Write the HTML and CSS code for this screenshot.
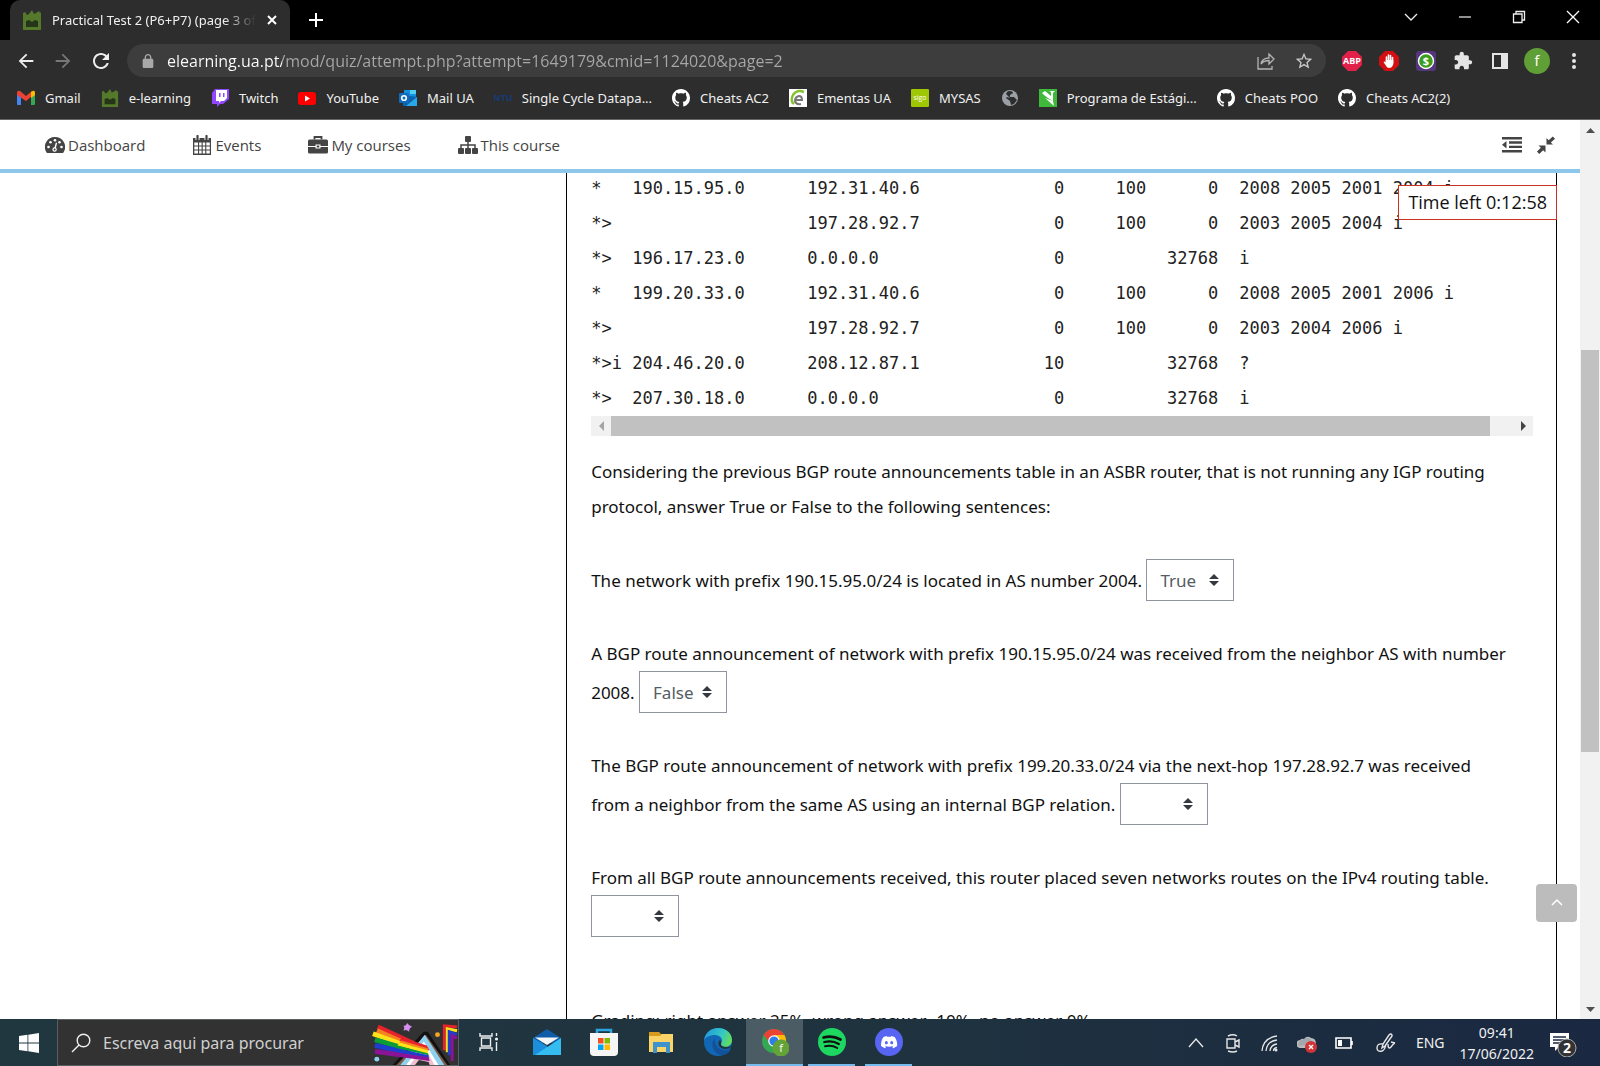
FILE: index.html
```html
<!DOCTYPE html>
<html lang="en">
<head>
<meta charset="utf-8">
<title>Practical Test 2 (P6+P7) (page 3 of 5)</title>
<link rel="stylesheet" href="styles.css">
</head>
<body>
<svg class="defs" aria-hidden="true">
  <symbol id="castle" viewBox="0 0 20 20"><path fill="#55792b" d="M1 3l2-1 2 3 2-1 3-4 2 4 2-1 3-2 1 2 1-1v18H1z"/><path fill="#26351a" d="M4 11l3-1 3 2 3-2 3 1v6H4z"/></symbol>
  <symbol id="github" viewBox="0 0 16 16"><path fill="#fff" d="M8 0C3.58 0 0 3.58 0 8c0 3.54 2.29 6.53 5.47 7.59.4.07.55-.17.55-.38 0-.19-.01-.82-.01-1.49-2.01.37-2.53-.49-2.69-.94-.09-.23-.48-.94-.82-1.13-.28-.15-.68-.52-.01-.53.63-.01 1.08.58 1.23.82.72 1.21 1.87.87 2.33.66.07-.52.28-.87.51-1.07-1.78-.2-3.64-.89-3.64-3.95 0-.87.31-1.59.82-2.15-.08-.2-.36-1.02.08-2.12 0 0 .67-.21 2.2.82.64-.18 1.32-.27 2-.27.68 0 1.36.09 2 .27 1.53-1.04 2.2-.82 2.2-.82.44 1.1.16 1.92.08 2.12.51.56.82 1.27.82 2.15 0 3.07-1.87 3.75-3.65 3.95.29.25.54.73.54 1.48 0 1.07-.01 1.93-.01 2.2 0 .21.15.46.55.38A8.013 8.013 0 0016 8c0-4.42-3.58-8-8-8z"/></symbol>
</svg>

<header class="browser">
  <div class="titlebar">
    <div class="tab">
      <svg class="i20"><use href="#castle"/></svg>
      <span class="tab-title">Practical Test 2 (P6+P7) (page 3 of 5)</span>
      <button class="bare" aria-label="Close tab"><svg class="i12" viewBox="0 0 12 12"><path d="M2 2l8 8M10 2l-8 8" stroke="#fff" stroke-width="2"/></svg></button>
    </div>
    <button class="bare new-tab" aria-label="New tab"><svg class="i16" viewBox="0 0 16 16"><path d="M8 1v14M1 8h14" stroke="#fff" stroke-width="2"/></svg></button>
    <div class="window-buttons">
      <button class="bare" aria-label="Search tabs"><svg class="i14" viewBox="0 0 14 14"><path d="M1 4l6 6 6-6" fill="none" stroke="#eee" stroke-width="1.3"/></svg></button>
      <button class="bare" aria-label="Minimise"><svg class="i14" viewBox="0 0 14 14"><path d="M1 7h12" stroke="#ddd" stroke-width="1.3"/></svg></button>
      <button class="bare" aria-label="Restore"><svg class="i14" viewBox="0 0 14 14"><path d="M1.500 4h8.500v8.500h-8.500zM4 4V1.500h8.500V10H10" fill="none" stroke="#eee" stroke-width="1.300"/></svg></button>
      <button class="bare" aria-label="Close"><svg class="i14" viewBox="0 0 14 14"><path d="M1 1l12 12M13 1L1 13" stroke="#fff" stroke-width="1.3"/></svg></button>
    </div>
  </div>

  <div class="toolbar">
    <div class="nav-buttons">
      <button class="bare" aria-label="Back"><svg class="i22" viewBox="0 0 24 24"><path fill="#eee" d="M20 11H7.830l5.590-5.590L12 4l-8 8 8 8 1.410-1.410L7.830 13H20v-2z"/></svg></button>
      <button class="bare" aria-label="Forward"><svg class="i22" viewBox="0 0 24 24"><path fill="#777" d="M12 4l-1.410 1.410L16.170 11H4v2h12.170l-5.580 5.590L12 20l8-8z"/></svg></button>
      <button class="bare" aria-label="Reload"><svg class="i24" viewBox="0 0 24 24"><path fill="#eee" d="M17.650 6.350C16.200 4.900 14.210 4 12 4c-4.420 0-7.990 3.580-7.990 8s3.570 8 7.990 8c3.730 0 6.840-2.550 7.730-6h-2.080c-.82 2.330-3.040 4-5.650 4-3.310 0-6-2.690-6-6s2.690-6 6-6c1.660 0 3.140.69 4.220 1.780L13 11h7V4l-2.350 2.350z"/></svg></button>
    </div>
    <div class="address">
      <svg class="i14" viewBox="3 1 18 21"><path fill="#a8a8a8" d="M18 8h-1V6c0-2.760-2.240-5-5-5S7 3.240 7 6v2H6c-1.100 0-2 .9-2 2v10c0 1.100.9 2 2 2h12c1.100 0 2-.9 2-2V10c0-1.100-.9-2-2-2zM9 6c0-1.660 1.340-3 3-3s3 1.340 3 3v2H9V6z"/></svg>
      <input class="url" type="text" aria-label="Address" value="elearning.ua.pt/mod/quiz/attempt.php?attempt=1649179&amp;cmid=1124020&amp;page=2">
      <button class="bare" aria-label="Share"><svg class="i20" viewBox="0 0 20 20"><path d="M2 6v12h14v-3M5 13c1-5 4-6 8-6V3l5 5-5 5V9.500c-4 0-6 1-8 3.500z" fill="none" stroke="#b5b5b5" stroke-width="1.300"/></svg></button>
      <button class="bare" aria-label="Bookmark"><svg class="i20" viewBox="0 0 24 24"><path fill="#c8c8c8" d="M22 9.240l-7.190-.62L12 2 9.190 8.630 2 9.240l5.460 4.730L5.820 21 12 17.270 18.180 21l-1.630-7.030L22 9.240zM12 15.400l-3.760 2.270 1-4.280-3.320-2.880 4.380-.38L12 6.100l1.710 4.040 4.380.38-3.320 2.880 1 4.280L12 15.400z"/></svg></button>
    </div>
    <div class="extensions">
      <button class="bare" aria-label="Adblock Plus"><svg class="i20" viewBox="0 0 20 20"><path fill="#e2214b" d="M6 0h8l6 6v8l-6 6H6l-6-6V6z"/><text x="10" y="13" class="abp">ABP</text></svg></button>
      <button class="bare" aria-label="AdBlock"><svg class="i20" viewBox="0 0 20 20"><path fill="#d40f12" d="M6 0h8l6 6v8l-6 6H6l-6-6V6z"/><path d="M7.500 12V6M9.500 10V4M11.500 10V4.500M13.500 12V6.500" stroke="#fff" stroke-width="1.600" stroke-linecap="round"/><path fill="#fff" d="M6.700 9h7.600v4q-1 4-4 4-2.300 0-3.500-2.500L4.500 11q.8-1.200 2.200.5z"/></svg></button>
      <button class="bare" aria-label="Coupons"><svg class="i20" viewBox="0 0 20 20"><rect width="20" height="20" rx="3" fill="#54357e"/><circle cx="10" cy="10" r="7.500" fill="#3c9c1e" stroke="#fff" stroke-width="1.400"/><text x="10" y="14" class="dollar">$</text></svg></button>
      <button class="bare" aria-label="Extensions"><svg class="i20" viewBox="0 0 24 24"><path fill="#e4e4e4" d="M20.500 11H19V7c0-1.100-.9-2-2-2h-4V3.500C13 2.120 11.880 1 10.500 1S8 2.120 8 3.500V5H4c-1.100 0-1.990.9-1.990 2v3.800H3.500c1.490 0 2.700 1.210 2.700 2.700s-1.210 2.700-2.700 2.700H2V20c0 1.100.9 2 2 2h3.800v-1.500c0-1.490 1.210-2.700 2.700-2.700 1.490 0 2.700 1.210 2.700 2.700V22H17c1.100 0 2-.9 2-2v-4h1.500c1.380 0 2.500-1.120 2.500-2.500S21.880 11 20.500 11z"/></svg></button>
      <button class="bare" aria-label="Side panel"><svg class="i20" viewBox="0 0 20 20"><path fill="#e4e4e4" fill-rule="evenodd" d="M2 2h16v16H2zM4 4v12h7V4z"/></svg></button>
      <button class="avatar" aria-label="Profile">f</button>
      <button class="bare" aria-label="Menu"><svg class="i20" viewBox="0 0 20 20"><g fill="#e4e4e4"><circle cx="10" cy="4" r="2"/><circle cx="10" cy="10" r="2"/><circle cx="10" cy="16" r="2"/></g></svg></button>
    </div>
  </div>

  <nav class="bookmarks" aria-label="Bookmarks">
    <a href="#"><svg class="i18" viewBox="0 0 18 18"><path fill="#4285f4" d="M0 4h4v12H1q-1 0-1-1z"/><path fill="#34a853" d="M14 4h4v11q0 1-1 1h-3z"/><path fill="#ea4335" d="M0 4q0-3 3-2l6 5 6-5v5l-6 5-9-6z"/><path fill="#fbbc04" d="M14 3q4-3 4 1v2l-4 3z"/></svg>Gmail</a>
    <a href="#"><svg class="i18"><use href="#castle"/></svg>e-learning</a>
    <a href="#"><svg class="i18" viewBox="0 0 18 18"><path fill="#9147ff" d="M4 0h14v10l-6 5H9l-3 3v-3H1V4z"/><path fill="#fff" d="M5 1h11v8l-3 3h-3l-2 2v-2H5z"/><path fill="#9147ff" d="M8 4h1.500v4H8zM12 4h1.500v4H12z"/></svg>Twitch</a>
    <a href="#"><svg class="i18" viewBox="0 0 18 18"><rect y="3" width="18" height="13" rx="3" fill="#f00"/><path fill="#fff" d="M7 6.500v6l5-3z"/></svg>YouTube</a>
    <a href="#"><svg class="i18" viewBox="0 0 18 18"><path fill="#1490df" d="M5 1h12v7H5z"/><path fill="#0a64ad" d="M4 6l14 2v9H4z"/><path fill="#50d0f5" d="M11 1h6v4h-6z"/><path fill="#28a8ea" d="M18 8v9H7z"/><rect y="4" width="10" height="10" rx="1" fill="#0f6cbd"/><circle cx="5" cy="9" r="2.300" fill="none" stroke="#fff" stroke-width="1.600"/></svg>Mail UA</a>
    <a href="#"><svg class="i18" viewBox="0 0 18 18"><text x="9" y="12" class="ntu">NTU</text></svg>Single Cycle Datapa...</a>
    <a href="#"><svg class="i18"><use href="#github"/></svg>Cheats AC2</a>
    <a href="#"><svg class="i18" viewBox="0 0 18 18"><path fill="#fff" d="M0 0h18v18H0z"/><path d="M15 3Q8 0 4 6q-3 6 1 9" fill="none" stroke="#86c32b" stroke-width="2.500"/><path d="M6 11h7q0-4-3-4-4 1-4 5 1 4 6 3" fill="none" stroke="#777" stroke-width="2"/></svg>Ementas UA</a>
    <a href="#"><svg class="i18" viewBox="0 0 18 18"><rect width="18" height="18" rx="1" fill="#9fc703"/><text x="9" y="11" class="sigo">sigo</text></svg>MYSAS</a>
    <a href="#" aria-label="Untitled bookmark"><svg class="i18" viewBox="0 0 18 18"><circle cx="9" cy="9" r="8" fill="#9aa0a6"/><path fill="#2d2d2d" d="M8 2q4 0 4 2l-3 2v2h4l3 3-3 4-3 1-1-4-4-3 1-1 3 1-4-4q1-3 3-3z"/></svg></a>
    <a href="#"><svg class="i18" viewBox="0 0 18 18"><path fill="#3fb93a" d="M0 0h18v18H0z"/><path fill="#fff" d="M3 4l3-2 6 5V3l-2-1h6l-2 2v8L9 9 5 6zM6 9l8 3 1 5z"/></svg>Programa de Estági...</a>
    <a href="#"><svg class="i18"><use href="#github"/></svg>Cheats POO</a>
    <a href="#"><svg class="i18"><use href="#github"/></svg>Cheats AC2(2)</a>
  </nav>
</header>

<div class="page">
  <div class="site">
    <nav class="site-nav" aria-label="Site">
      <a href="#"><svg class="i20" viewBox="0 0 20 20"><path fill="#444" d="M10 2a10 10 0 0 0-8.600 15.200l.6.800h16l.6-.8A10 10 0 0 0 10 2z"/><g fill="#fff"><circle cx="3.500" cy="12" r="1.300"/><circle cx="5.500" cy="7.300" r="1.300"/><circle cx="10" cy="5.200" r="1.300"/><circle cx="14.500" cy="7.300" r="1.300"/><circle cx="16.500" cy="12" r="1.300"/><circle cx="9.600" cy="14.500" r="2.200"/><path d="M10.800 7.500l1.300.4-1.500 6.100-1.400-.3z"/></g><circle cx="9.600" cy="14.500" r="1" fill="#444"/></svg>Dashboard</a>
      <a href="#"><svg class="i20" viewBox="0 0 20 20"><path fill="#444" fill-rule="evenodd" d="M1 3h18v17H1zM2.300 7.500v3H6v-3zm4.800 0v3h2.500v-3zm3.600 0v3h2.500v-3zm3.600 0v3h3.500v-3zM2.300 11.500v3H6v-3zm4.800 0v3h2.500v-3zm3.600 0v3h2.500v-3zm3.600 0v3h3.500v-3zM2.300 15.600v3H6v-3zm4.800 0v3h2.500v-3zm3.600 0v3h2.500v-3zm3.600 0v3h3.500v-3z"/><path d="M5.500 1.500v3.500M14.500 1.500v3.500" stroke="#fff" stroke-width="4"/><path d="M5.500 1v4M14.500 1v4" stroke="#444" stroke-width="2.200" stroke-linecap="round"/></svg>Events</a>
      <a href="#"><svg class="i20" viewBox="0 0 20 20"><path fill="#444" d="M1.500 4.500h17q1.500 0 1.500 1.500v5h-7.500V9.500h-5V11H0V6q0-1.500 1.500-1.500zM0 12h7.500v1.500h5V12H20v5q0 1.500-1.500 1.500h-17Q0 18.500 0 17z"/><path d="M6.500 4.500V2h7v2.500" fill="none" stroke="#444" stroke-width="1.800"/><path fill="#444" d="M8.700 10.500h2.600v2H8.700z"/></svg>My courses</a>
      <a href="#"><svg class="i20" viewBox="0 0 20 20"><g fill="#444"><rect x="7" y="1" width="6" height="6" rx="1"/><rect y="13" width="6" height="6" rx="1"/><rect x="7" y="13" width="6" height="6" rx="1"/><rect x="14" y="13" width="6" height="6" rx="1"/></g><path d="M10 6v8M3 14v-4h14v4" fill="none" stroke="#444" stroke-width="1.500"/></svg>This course</a>
      <div class="site-tools">
        <button class="bare" aria-label="Toggle blocks"><svg class="i20" viewBox="0 0 20 20"><path fill="#444" d="M0 2h20v2.500H0zM7 6.300h13v2.400H7zM7 10.700h13v2.400H7zM0 15h20v2.500H0zM0 9.700L4.500 6v7.500z"/></svg></button>
        <button class="bare" aria-label="Full width"><svg class="i20" viewBox="0 0 20 20"><path fill="#444" d="M10.500 3v6.500H17l-2.200-2.100L19 3.700 16.800 1.500l-4.100 3.800zM9.500 10.500h-7l2.300 2.300L1 16.500 3.200 19l4-3.700 2.300 2.200z"/></svg></button>
      </div>
    </nav>

    <div class="viewport">
      <aside class="blocks"></aside>
      <main class="question">
        <div class="routes-wrap">
          <table class="routes">
            <colgroup><col class="c-status"><col class="c-net"><col class="c-hop"><col class="c-metric"><col class="c-pref"><col class="c-weight"><col></colgroup>
            <tbody>
            <tr><td>*</td><td>190.15.95.0</td><td>192.31.40.6</td><td>0</td><td>100</td><td>0</td><td>2008 2005 2001 2004 i</td></tr>
            <tr><td>*&gt;</td><td></td><td>197.28.92.7</td><td>0</td><td>100</td><td>0</td><td>2003 2005 2004 i</td></tr>
            <tr><td>*&gt;</td><td>196.17.23.0</td><td>0.0.0.0</td><td>0</td><td></td><td>32768</td><td>i</td></tr>
            <tr><td>*</td><td>199.20.33.0</td><td>192.31.40.6</td><td>0</td><td>100</td><td>0</td><td>2008 2005 2001 2006 i</td></tr>
            <tr><td>*&gt;</td><td></td><td>197.28.92.7</td><td>0</td><td>100</td><td>0</td><td>2003 2004 2006 i</td></tr>
            <tr><td>*&gt;i</td><td>204.46.20.0</td><td>208.12.87.1</td><td>10</td><td></td><td>32768</td><td>?</td></tr>
            <tr><td>*&gt;</td><td>207.30.18.0</td><td>0.0.0.0</td><td>0</td><td></td><td>32768</td><td>i</td></tr>
            </tbody>
          </table>
          <div class="hbar">
            <svg class="i20" viewBox="0 0 20 20"><path fill="#a3a3a3" d="M13 5v10l-5-5z"/></svg>
            <div class="hbar-thumb"></div>
            <svg class="i20" viewBox="0 0 20 20"><path fill="#444" d="M8 5v10l5-5z"/></svg>
          </div>
        </div>
        <p>Considering the previous BGP route announcements table in an ASBR router, that is not running any IGP routing<br>protocol, answer True or False to the following sentences:</p>
        <p><label for="a1">The network with prefix 190.15.95.0/24 is located in AS number 2004.</label>
          <select id="a1"><option></option><option selected>True</option><option>False</option></select></p>
        <p><label for="a2">A BGP route announcement of network with prefix 190.15.95.0/24 was received from the neighbor AS with number<br>2008.</label>
          <select id="a2"><option></option><option>True</option><option selected>False</option></select></p>
        <p><label for="a3">The BGP route announcement of network with prefix 199.20.33.0/24 via the next-hop 197.28.92.7 was received<br>from a neighbor from the same AS using an internal BGP relation.</label>
          <select id="a3"><option selected></option><option>True</option><option>False</option></select></p>
        <p><label for="a4">From all BGP route announcements received, this router placed seven networks routes on the IPv4 routing table.</label><br>
          <select id="a4"><option selected></option><option>True</option><option>False</option></select></p>
        <p class="grading">Grading: right answer 25%, wrong answer -10%, no answer 0%.</p>
      </main>
      <div class="timer">Time left 0:12:58</div>
      <button class="to-top" aria-label="Back to top"><svg class="i14" viewBox="0 0 14 14"><path d="M2 9l5-5 5 5" fill="none" stroke="#fff" stroke-width="1.500"/></svg></button>
    </div>
  </div>
  <div class="vbar">
    <svg class="i20" viewBox="0 0 20 20"><path fill="#505050" d="M6 13h9l-4.500-5z"/></svg>
    <div class="vbar-track"><div class="vbar-thumb"></div></div>
    <svg class="i20" viewBox="0 0 20 20"><path fill="#505050" d="M6 8h9l-4.500 5z"/></svg>
  </div>
</div>

<footer class="taskbar">
  <button class="start" aria-label="Start"><svg class="i20" viewBox="0 0 20 20"><path fill="#fff" d="M0 3l8.500-1.200V9.600H0zM9.300 1.700L20 0v9.600H9.300zM0 10.400h8.500v7.800L0 17zM9.300 10.400H20V20L9.300 18.300z"/></svg></button>
  <div class="search">
    <svg class="i20" viewBox="0 0 20 20"><circle cx="12.500" cy="7.500" r="6.300" fill="none" stroke="#eee" stroke-width="1.400"/><path d="M8 12l-7 7" stroke="#eee" stroke-width="1.500"/></svg>
    <input type="text" aria-label="Search" placeholder="Escreva aqui para procurar">
    <svg class="pride" viewBox="0 0 86 46">
      <path d="M5 7l56 26" stroke="#e8222a" stroke-width="5"/><path d="M4 11l55 24" stroke="#f58220" stroke-width="5"/><path d="M0 14l58 21" stroke="#ffe11a" stroke-width="5"/><path d="M2 20l57 17" stroke="#0b9c3a" stroke-width="5"/><path d="M2 26l57 13" stroke="#1c3fd0" stroke-width="5"/><path d="M2 32l58 8" stroke="#8a1397" stroke-width="5"/>
      <path fill="#111" d="M20 46l32-34h4l23 34z"/><path fill="#7b5a48" d="M24 46l30-31 22 31z"/><path fill="#8fd0ee" d="M28 46l25-31 20 31z"/><path fill="#fff" d="M34 46l18-24 15 24z"/><path fill="#f3bfd0" d="M38 46l14-20 11 20z"/>
      <path fill="#e8222a" d="M30 18l25 8 3 5-31-10z"/><path fill="#f58220" d="M29 21l27 8 1 3-30-9z"/><path fill="#ffe11a" d="M27 23l29 8 1 4-32-9z"/><path fill="#0b9c3a" d="M25 26l31 8 1 2-33-7z"/><path fill="#1c3fd0" d="M24 29l33 7v3l-34-6z"/><path fill="#8a1397" d="M23 33l34 5 1 4-36-5z"/><path fill="#333" d="M43 46l4-5 10 2 1 3z"/>
      <g fill="none" stroke-width="3"><path d="M86 7l-13-1v25" stroke="#e8222a"/><path d="M86 11l-10-2v24" stroke="#ffe11a"/><path d="M86 15l-8-3v24" stroke="#1c3fd0"/><path d="M86 19l-5-3v26" stroke="#8a1397"/></g>
      <path fill="#d78cf0" d="M35 3q2 3 5 4-3 1-3 5-3-3-6-1 2-3 0-5 3 0 4-3z"/><circle cx="66" cy="15" r="2.500" fill="#f5a623"/><circle cx="4" cy="40" r="2.500" fill="#8fd0ee"/>
    </svg>
  </div>
  <button class="task view" aria-label="Task view"><svg class="i20" viewBox="0 0 20 20"><g fill="none" stroke="#eee" stroke-width="1.400"><path d="M1 1v3h12V1M1 19v-3h12v3M2.500 6v8h9V6zM17.500 1v3M17.500 10v9"/></g><circle cx="17.500" cy="7" r="1.600" fill="#eee"/></svg></button>
  <button class="task" aria-label="Mail"><svg class="i28" viewBox="0 0 28 28"><path fill="#0f5ca8" d="M0 10L14 1l14 9v5H0z"/><path fill="#1c8fdc" d="M0 10l14 8v9H0z"/><path fill="#35bdf2" d="M28 10v17H2z"/><path fill="#f4f6f8" d="M2 9.500h24L14 17z"/></svg></button>
  <button class="task" aria-label="Store"><svg class="i28" viewBox="0 0 28 28"><path d="M7 6V2h14v4" fill="none" stroke="#2aa5e0" stroke-width="2.500"/><path fill="#f5f5f5" d="M0 5h28v19q0 4-4 4H4q-4 0-4-4z"/><path fill="#f25022" d="M8 10h5.500v5.500H8z"/><path fill="#7fba00" d="M14.500 10H20v5.500h-5.500z"/><path fill="#00a4ef" d="M8 16.500h5.500V22H8z"/><path fill="#ffb900" d="M14.500 16.500H20V22h-5.500z"/></svg></button>
  <button class="task" aria-label="File Explorer"><svg class="i28" viewBox="0 0 28 28"><path fill="#d99b1c" d="M2 4h10l2 2h11v4H2z"/><path fill="#fbd366" d="M2 8h11l2-2h11v18H2z"/><path fill="#3f93cc" d="M6 14h17v11h-4v-6h-9v6H6z"/></svg></button>
  <button class="task" aria-label="Edge"><svg class="i28" viewBox="0 0 28 28"><defs><linearGradient id="eg" x1="0" x2="1" y1=".3" y2=".6"><stop offset="0" stop-color="#2098dc"/><stop offset=".6" stop-color="#35c8c4"/><stop offset="1" stop-color="#66dd55"/></linearGradient></defs><circle cx="14" cy="14" r="14" fill="#1267b4"/><path fill="url(#eg)" d="M0 14C0 5 7 0 14 0c9 0 14 6 14 12 0 4-3 7-7 7-3 0-5-1-5-3 0-1 2-1 2-4 0-2-3-5-7-5-5 0-11 2-11 7z"/><path fill="#12529c" d="M11 10c-6 6-1 17 7 17 4 0 7-2 9-6-6 3-17 1-16-11z"/><path fill="#20363f" d="M16 12c-4 4 0 9 5 9 3 0 5-1 6-2l2 1v-4c-2 3-4 3-6 3-4 0-6-1-6-3 0-1 1-2-1-4z"/></svg></button>
  <button class="task open active" aria-label="Chrome"><svg class="i28" viewBox="0 0 28 28"><circle cx="13" cy="13" r="12" fill="#34a853"/><path fill="#ea4335" d="M2.600 7A12 12 0 0 1 23.400 7L13 8l-4 7z"/><path fill="#fbbc04" d="M13 7h10.400A12 12 0 0 1 13 25l5-9z"/><circle cx="13" cy="13" r="5.800" fill="#fff"/><circle cx="13" cy="13" r="4.600" fill="#2f7de9"/><circle cx="20" cy="20" r="8.500" fill="#64a338"/><text x="20" y="24" class="badge-f">f</text></svg></button>
  <button class="task open" aria-label="Spotify"><svg class="i28" viewBox="0 0 28 28"><circle cx="14" cy="14" r="14" fill="#1ed760"/><g fill="none" stroke="#101010" stroke-linecap="round"><path d="M5.500 9.500q9-2.500 17 2" stroke-width="2.700"/><path d="M6.300 14q8-2 14.500 2" stroke-width="2.300"/><path d="M7 18.300q7-1.500 12.200 1.700" stroke-width="1.900"/></g></svg></button>
  <button class="task open" aria-label="Discord"><svg class="i28" viewBox="0 0 28 28"><circle cx="14" cy="14" r="14" fill="#5865f2"/><g transform="translate(6 6) scale(.67)"><path fill="#fff" d="M20.317 4.370a19.800 19.800 0 0 0-4.885-1.515c-.3.400-.5.900-.69 1.286-1.845-.276-3.680-.276-5.487 0-.164-.393-.406-.874-.7-1.286A19.700 19.700 0 0 0 3.677 4.370C.533 9.046-.319 13.580.1 18.058c2.053 1.508 4.041 2.423 6.100 3.050.5-.65.900-1.320 1.300-2.100-.7-.25-1.300-.55-1.900-.95l.5-.4c3.928 1.793 8.180 1.793 12.061 0l.5.400c-.6.400-1.200.700-1.900.95.400.78.800 1.450 1.300 2.100 2-.6 4-1.530 6.033-3.050.5-5.177-.838-9.674-3.777-13.688zM8.020 15.330c-1.183 0-2.157-1.085-2.157-2.418s.956-2.420 2.157-2.420c1.210 0 2.176 1.096 2.157 2.420 0 1.333-.956 2.418-2.157 2.418zm7.975 0c-1.183 0-2.157-1.085-2.157-2.418s.955-2.420 2.157-2.420c1.210 0 2.176 1.096 2.157 2.420 0 1.333-.946 2.418-2.157 2.418z"/></g></svg></button>
  <div class="tray">
    <div class="tray-icons">
      <button class="bare" aria-label="Hidden icons"><svg class="i20" viewBox="0 0 20 20"><path d="M3 14l7-8 7 8" fill="none" stroke="#e6e6e6" stroke-width="1.400"/></svg></button>
      <button class="bare" aria-label="Meet now"><svg class="i20" viewBox="0 0 20 20"><path d="M4 6h8v9H4zM12 9l4-2v7l-4-2M5 3q5-2.500 9 0M5 18q5 2 9 0" fill="none" stroke="#e6e6e6" stroke-width="1.400"/></svg></button>
      <button class="bare" aria-label="Network"><svg class="i20" viewBox="0 0 20 20"><path d="M2 18Q3 5 17 3M6 18Q7 8 17 7M10 18q.5-6 7-7M13.500 18q0-3 3.500-3.500" fill="none" stroke="#e6e6e6" stroke-width="1.300"/><circle cx="16" cy="17" r="1.500" fill="#e6e6e6"/></svg></button>
      <button class="bare" aria-label="OneDrive"><svg class="i20" viewBox="0 0 20 20"><path fill="#b9bcc0" d="M4 15a4 4 0 0 1-1-8q2-2 4-1 3-4 7-1 5 0 5 6v4z"/><path fill="#8f9499" d="M7 6q4-4 8 2l-5 4-9 1 1-5z" opacity=".5"/><circle cx="14" cy="14" r="6" fill="#d13438"/><path d="M12 12l4 4M16 12l-4 4" stroke="#fff" stroke-width="1.400"/></svg></button>
      <button class="bare" aria-label="Battery"><svg class="i20" viewBox="0 0 20 20"><path d="M2 5h15v10H2zM18 8v4" fill="none" stroke="#fff" stroke-width="1.600"/><path fill="#fff" d="M4 7h4v6H4z"/></svg></button>
      <button class="bare pen" aria-label="Pen"><svg class="i20" viewBox="0 0 20 20"><path d="M6 15l1-4 6-9q2-2 3 0v1l-7 10zM7 11q-6-1-6 4 0 4 5 3 3-1 4-7M12 11q0 6 3 3 3-4 4-4l-4-1" fill="none" stroke="#e6e6e6" stroke-width="1.400"/></svg></button>
    </div>
    <span>ENG</span>
    <time class="clock"><span>09:41</span><span>17/06/2022</span></time>
    <button class="bare" aria-label="Notifications"><svg class="i28" viewBox="0 0 28 28"><path fill="#fff" d="M1 4h19v14H10l-4 4v-4H1z"/><path d="M4 8h13M4 11h13M4 14h8" stroke="#1b2a3f" stroke-width="1.300"/><circle cx="18" cy="19" r="9" fill="#333" stroke="#aaa"/><text x="18" y="24" class="count">2</text></svg></button>
  </div>
</footer>
</body>
</html>
```
FILE: styles.css
```css
* { box-sizing: border-box; }

body {
  margin: 0;
  height: 100vh;
  display: flex;
  flex-direction: column;
  overflow: hidden;
  background: #fff;
  font-family: "Open Sans", "Noto Sans", sans-serif;
  font-size: 17px;
  color: #111;
}

button, input, select { font: inherit; }
svg { display: block; flex: none; }
a { color: inherit; text-decoration: none; }

.defs { position: absolute; width: 0; height: 0; }
.i12 { width: 12px; height: 12px; }
.i14 { width: 14px; height: 14px; }
.i16 { width: 16px; height: 16px; }
.i18 { width: 18px; height: 18px; }
.i20 { width: 20px; height: 20px; }
.i22 { width: 22px; height: 22px; }
.i24 { width: 24px; height: 24px; }
.i28 { width: 28px; height: 28px; }

.bare {
  display: flex;
  padding: 0;
  border: 0;
  background: none;
}

/* Browser window */
.browser {
  flex: none;
  background: #2d2d2d;
  color: #f0f0f0;
  font-family: "Noto Sans", "Open Sans", sans-serif;
}

.titlebar {
  display: flex;
  align-items: center;
  height: 40px;
  padding-left: 10px;
  background: #000;
}

.tab {
  display: flex;
  align-items: center;
  align-self: stretch;
  width: 280px;
  padding: 0 12px;
  gap: 10px;
  border-radius: 10px 10px 0 0;
  background: #2d2d2d;
}

.tab-title {
  flex: 1;
  overflow: hidden;
  white-space: nowrap;
  font-size: 13px;
  -webkit-mask-image: linear-gradient(to left, transparent, #000 32px);
  mask-image: linear-gradient(to left, transparent, #000 32px);
}

.new-tab { margin-left: 18px; }

.window-buttons {
  display: flex;
  gap: 40px;
  margin-left: auto;
  padding: 0 20px 6px 0;
}

.toolbar {
  display: flex;
  align-items: center;
  height: 41px;
}

.nav-buttons {
  display: flex;
  align-items: center;
  gap: 15px;
  padding: 0 14px 0 15px;
}

.address {
  flex: 1;
  display: flex;
  align-items: center;
  gap: 18px;
  height: 33px;
  padding: 0 12px 0 14px;
  border-radius: 17px;
  background: #3d3d3d;
}

.url {
  flex: 1;
  min-width: 0;
  margin-left: -6px;
  padding: 0;
  border: 0;
  outline: 0;
  font-family: "Open Sans", sans-serif;
  font-size: 16px;
  color: transparent;
  background: linear-gradient(to right, #fff 115px, #a8a8a8 115px);
  -webkit-background-clip: text;
  background-clip: text;
}

.extensions {
  display: flex;
  align-items: center;
  gap: 17px;
  padding: 0 16px;
}

.avatar {
  width: 26px;
  height: 26px;
  margin: 0 -3px;
  padding: 0;
  border: 0;
  border-radius: 50%;
  background: #5f9f35;
  color: #fff;
  font-size: 14px;
  line-height: 24px;
}

.bookmarks {
  display: flex;
  align-items: center;
  gap: 20px;
  height: 39px;
  padding: 0 17px 4px;
  border-bottom: 1px solid #666;
  font-size: 13px;
  white-space: nowrap;
}

.bookmarks a {
  display: flex;
  align-items: center;
  gap: 10px;
}

svg text {
  text-anchor: middle;
  font-family: "Open Sans", sans-serif;
  fill: #fff;
}
.abp { font-size: 9px; font-weight: 700; }
.dollar { font-size: 11px; font-weight: 700; }
.ntu { font-size: 9px; font-weight: 700; fill: #163a78; }
.sigo { font-size: 7px; }
.badge-f { font-size: 11px; }
.count { font-size: 14px; font-weight: 700; }

/* Site */
.page {
  flex: 1;
  min-height: 0;
  display: flex;
}

.site {
  flex: 1;
  min-width: 0;
  display: flex;
  flex-direction: column;
}

.site-nav {
  display: flex;
  align-items: center;
  gap: 47px;
  height: 53px;
  flex: none;
  padding: 0 24px 0 45px;
  border-bottom: 4px solid #8dc8ea;
  color: #444;
  font-size: 15px;
}

.site-nav a {
  display: flex;
  align-items: center;
  gap: 3px;
}

.site-tools {
  display: flex;
  gap: 14px;
  margin-left: auto;
}

.viewport {
  position: relative;
  flex: 1;
  min-height: 0;
  display: grid;
  grid-template-columns: 4fr 7fr;
  padding-right: 23px;
  overflow: hidden;
  font-family: "Noto Sans", "Open Sans", sans-serif;
}

.question {
  min-width: 0;
  padding: 0 23px 0 24px;
  border: solid #000;
  border-width: 0 1px;
  line-height: 35px;
}

.question p { margin: 0 0 35px; }
.question .grading { margin-top: 66px; }

.routes-wrap {
  margin: -2px 0 18px;
}

.routes {
  table-layout: fixed;
  width: 100%;
  border-collapse: collapse;
  font-family: "DejaVu Sans Mono", monospace;
  font-size: 17px;
  color: #222;
  white-space: nowrap;
}

.routes td { height: 35px; padding: 0; }
.c-status { width: 41px; }
.c-net { width: 175px; }
.c-hop { width: 175px; }
.c-metric { width: 82px; }
.c-pref { width: 82px; }
.c-weight { width: 72px; }
.routes td:nth-child(4),
.routes td:nth-child(5),
.routes td:nth-child(6) { text-align: right; }
.routes td:last-child { padding-left: 21px; }

.hbar {
  display: flex;
  height: 20px;
  background: #f1f1f1;
}
.hbar-thumb {
  flex: none;
  width: calc(100% - 63px);
  margin-right: auto;
  background: #c1c1c1;
}

.question select {
  appearance: none;
  width: 88px;
  height: 42px;
  padding: 0 13px;
  border: 1px solid #8f959e;
  border-radius: 0;
  color: #555c63;
  background: #fff url("data:image/svg+xml,%3Csvg xmlns='http://www.w3.org/2000/svg' viewBox='0 0 10 12'%3E%3Cpath fill='%23343a40' d='M0 5h10L5 0zM0 7h10l-5 5z'/%3E%3C/svg%3E") no-repeat right 14px center / 10px 12px;
}

.timer {
  position: absolute;
  top: 12px;
  right: 23px;
  padding: 0 9px;
  border: 1px solid #ca3120;
  background: #fff;
  font-family: "Open Sans", sans-serif;
  font-size: 18px;
  line-height: 33px;
}

.to-top {
  position: absolute;
  right: 3px;
  bottom: 97px;
  display: flex;
  align-items: center;
  justify-content: center;
  width: 41px;
  height: 38px;
  border: 0;
  border-radius: 4px;
  background: #bcbcbc;
}

.vbar {
  display: flex;
  flex-direction: column;
  width: 20px;
  background: #f1f1f1;
}
.vbar-track {
  flex: 1;
  padding: 210px 1px 0;
}
.vbar-thumb {
  height: 62%;
  background: #c1c1c1;
}

/* Taskbar */
.taskbar {
  flex: none;
  display: flex;
  height: 47px;
  background: linear-gradient(to right, #20373f, #1f333f 55%, #1a2841);
  color: #f0f0f0;
  font-family: "Noto Sans", "Open Sans", sans-serif;
  font-size: 14px;
}

.start, .task {
  display: flex;
  align-items: center;
  justify-content: center;
  width: 57px;
  padding: 0;
  border: 0;
  background: none;
}

.search {
  display: flex;
  align-items: center;
  gap: 12px;
  width: 402px;
  padding-left: 13px;
  border: 1px solid #5a5f61;
  background: #323232;
}
.search input {
  flex: 1;
  min-width: 0;
  padding: 0;
  border: 0;
  background: none;
  font-size: 16px;
}
.search input::placeholder { color: #d0d0d0; opacity: 1; }
.pride { width: 86px; height: 45px; }

.task { border-bottom: 2px solid transparent; }
.task.view { width: 59px; }
.task.open {
  width: 47px;
  margin: 0 5px;
  border-bottom-color: #76b9ed;
}
.task.active {
  width: 57px;
  margin: 0;
  background: #4c5c64;
}

.tray {
  display: flex;
  align-items: center;
  gap: 15px;
  margin-left: auto;
  padding-right: 23px;
}
.tray-icons {
  display: flex;
  gap: 17px;
  padding-right: 5px;
}
.pen { margin-left: 5px; }
.clock {
  display: flex;
  flex-direction: column;
  align-items: center;
  line-height: 21px;
}
```
